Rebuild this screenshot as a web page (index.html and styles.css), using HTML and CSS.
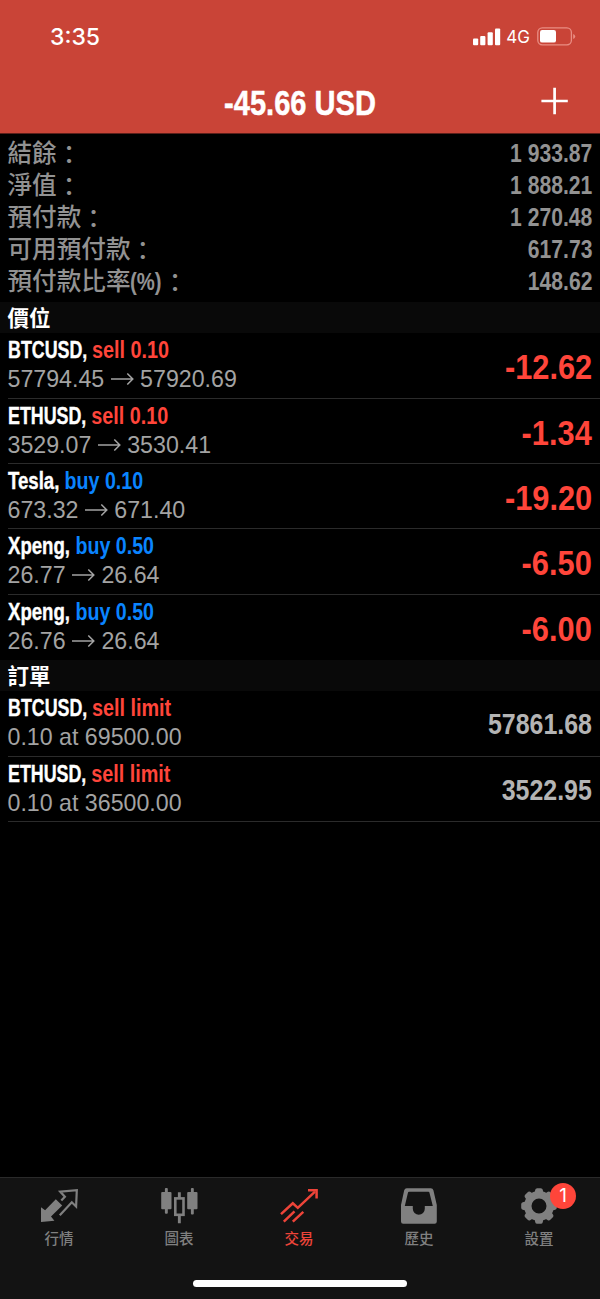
FILE: index.html
```html
<!DOCTYPE html>
<html lang="zh-Hant">
  <head>
    <meta charset="UTF-8" />
    <meta name="viewport" content="width=device-width, initial-scale=1.0" />
    <title>交易</title>
    <link rel="stylesheet" href="styles.css">
  </head>
  <body>
    <div class="app">
      <header class="header">
        <div class="status-bar">
          <span class="time">3:35</span>
          <div class="status-icons">
            <svg class="signal" width="28" height="18" viewBox="0 0 28 18" fill="#fff">
              <rect x="0" y="10.5" width="5.2" height="6.8" rx="1" />
              <rect x="7.2" y="8" width="5.2" height="9.3" rx="1" />
              <rect x="14.6" y="4.2" width="5.2" height="13.1" rx="1" />
              <rect x="22" y="0.5" width="5.2" height="16.8" rx="1" />
            </svg>
            <span class="network">4G</span>
            <svg class="battery" width="39" height="19" viewBox="0 0 39 19">
              <rect x="0.8" y="0.8" width="33.6" height="17" rx="4.5" fill="none" stroke="#e98d83" stroke-width="1.3" />
              <rect x="3" y="3" width="16" height="12.6" rx="2.2" fill="#fff" />
              <path d="M36.2 7v5q2-.6 2-2.5t-2-2.5z" fill="#e98d83" />
            </svg>
          </div>
        </div>
        <div class="title-bar">
          <h1 class="title">-45.66 USD</h1>
          <svg class="add" width="28" height="28" viewBox="0 0 28 28">
            <path d="M14.6 .8v26.4M1.4 14h26.4" stroke="#fff" stroke-width="2.7" />
          </svg>
        </div>
      </header>

      <main class="content">
        <!-- Account summary -->
        <div class="account">
          <div class="account-row"><span>結餘<span class="colon">：</span></span><span class="value">1 933.87</span></div>
          <div class="account-row"><span>淨值<span class="colon">：</span></span><span class="value">1 888.21</span></div>
          <div class="account-row"><span>預付款<span class="colon">：</span></span><span class="value">1 270.48</span></div>
          <div class="account-row"><span>可用預付款<span class="colon">：</span></span><span class="value">617.73</span></div>
          <div class="account-row"><span>預付款比率<span class="percent">(%)</span><span class="colon">：</span></span><span class="value">148.62</span></div>
        </div>

        <!-- Open positions -->
        <h2 class="section-title">價位</h2>
        <div class="row">
          <div class="info">
            <div class="name">BTCUSD, <span class="action sell">sell 0.10</span></div>
            <div class="price">57794.45 <svg class="arrow" viewBox="0 0 23 12"><path d="M0 6h22M16.3 .5l5.5 5.5-5.5 5.5" /></svg> 57920.69</div>
          </div>
          <div class="profit">-12.62</div>
        </div>
        <div class="row">
          <div class="info">
            <div class="name">ETHUSD, <span class="action sell">sell 0.10</span></div>
            <div class="price">3529.07 <svg class="arrow" viewBox="0 0 23 12"><path d="M0 6h22M16.3 .5l5.5 5.5-5.5 5.5" /></svg> 3530.41</div>
          </div>
          <div class="profit">-1.34</div>
        </div>
        <div class="row">
          <div class="info">
            <div class="name stock">Tesla, <span class="action buy">buy 0.10</span></div>
            <div class="price">673.32 <svg class="arrow" viewBox="0 0 23 12"><path d="M0 6h22M16.3 .5l5.5 5.5-5.5 5.5" /></svg> 671.40</div>
          </div>
          <div class="profit">-19.20</div>
        </div>
        <div class="row">
          <div class="info">
            <div class="name stock">Xpeng, <span class="action buy">buy 0.50</span></div>
            <div class="price">26.77 <svg class="arrow" viewBox="0 0 23 12"><path d="M0 6h22M16.3 .5l5.5 5.5-5.5 5.5" /></svg> 26.64</div>
          </div>
          <div class="profit">-6.50</div>
        </div>
        <div class="row last">
          <div class="info">
            <div class="name stock">Xpeng, <span class="action buy">buy 0.50</span></div>
            <div class="price">26.76 <svg class="arrow" viewBox="0 0 23 12"><path d="M0 6h22M16.3 .5l5.5 5.5-5.5 5.5" /></svg> 26.64</div>
          </div>
          <div class="profit">-6.00</div>
        </div>

        <!-- Pending orders -->
        <h2 class="section-title">訂單</h2>
        <div class="row">
          <div class="info">
            <div class="name">BTCUSD, <span class="action sell">sell limit</span></div>
            <div class="price">0.10 at 69500.00</div>
          </div>
          <div class="quote">57861.68</div>
        </div>
        <div class="row">
          <div class="info">
            <div class="name">ETHUSD, <span class="action sell">sell limit</span></div>
            <div class="price">0.10 at 36500.00</div>
          </div>
          <div class="quote">3522.95</div>
        </div>
      </main>

      <nav class="tab-bar">
        <div class="tabs">
          <div class="tab">
            <svg class="tab-icon" viewBox="0 0 38 36">
              <path d="M21.3 12.6l3.6-3.8-4.7-5.2 16.6-1.4-.7 16.3-4.3-4.2-12 13" fill="none" stroke="currentColor" stroke-width="2.2" />
              <path d="M15.8 11.2l6.4 6.4-11.2 10.8 3.4 4.4L1 34V19.3l4.1 3z" fill="currentColor" />
            </svg>
            <span>行情</span>
          </div>
          <div class="tab">
            <svg class="tab-icon" viewBox="0 0 38 36" fill="currentColor">
              <rect x="1.2" y="4" width="10.3" height="17.3" rx="1" />
              <rect x="4.9" y="0" width="2.9" height="25.7" rx="1" />
              <rect x="15.3" y="10.4" width="8.2" height="16.4" fill="none" stroke="currentColor" stroke-width="2.6" />
              <path d="M17.9 4.3h2.9v6h-2.9zM17.9 27h2.9v8.3h-2.9z" />
              <rect x="27.2" y="4" width="10.3" height="17.3" rx="1" />
              <rect x="30.9" y="0" width="2.9" height="26.5" rx="1" />
            </svg>
            <span>圖表</span>
          </div>
          <div class="tab active">
            <svg class="tab-icon" viewBox="0 0 38 36" fill="none" stroke="currentColor" stroke-width="2.5">
              <path d="M1 26.2l11.8-10.9 5 4.6L35 3.7" />
              <path d="M3.8 33.6l10.7-10.2M12.8 33.6l10.5-9.8" />
              <path d="M28 2.2h8.6v8.4" />
            </svg>
            <span>交易</span>
          </div>
          <div class="tab">
            <svg class="tab-icon" viewBox="0 0 38 36" fill="currentColor">
              <path fill-rule="evenodd" d="M6.8.2h24q2 0 2.6 2L36.8 17v16.5q0 2.2-2.2 2.2H3.2Q1 35.7 1 33.5V17L4.2 2.2q.6-2 2.6-2zM9 3.8q-.8 0-1 .8L4.8 18h8v2.7a6 6 0 0 0 12 0V18h8L29.4 4.6q-.2-.8-1-.8z" />
            </svg>
            <span>歷史</span>
          </div>
          <div class="tab">
            <svg class="tab-icon" viewBox="0 0 38 36" fill="none" stroke="currentColor">
              <circle cx="19" cy="18" r="11.2" stroke-width="7.4" />
              <g stroke-width="4" stroke-linecap="round" stroke-linejoin="round">
                <path id="teeth" d="M16.8 4l.4-1.8h3.6l.4 1.8M16.8 32l.4 1.8h3.6l.4-1.8M5 15.8l-1.8.4v3.6l1.8.4M33 15.8l1.8.4v3.6l-1.8.4" />
                <use href="#teeth" transform="rotate(45 19 18)" />
              </g>
            </svg>
            <span>設置</span>
            <div class="badge">1</div>
          </div>
        </div>
        <div class="home-indicator"></div>
      </nav>
    </div>
  </body>
</html>
```
FILE: styles.css
```css
* {
  box-sizing: border-box;
}

body {
  margin: 0;
  background-color: #000;
  font-family: "Liberation Sans", "Noto Sans CJK TC", sans-serif;
}

.app {
  display: flex;
  flex-direction: column;
  width: 600px;
  height: 1299px;
  overflow: hidden;
}

/* Header */
.header {
  height: 134px;
  background-color: #c94437;
  border-bottom: 1px solid #5c1f1a;
  color: #fff;
}

.status-bar {
  display: flex;
  justify-content: space-between;
  align-items: center;
  height: 73px;
  padding: 0 24px 0 50px;
}

.time {
  font-family: Inter, sans-serif;
  font-size: 23px;
  font-weight: 500;
}

.status-icons {
  display: flex;
  align-items: center;
}

.network {
  margin: 0 7px 0 5px;
  font-family: Inter, sans-serif;
  font-size: 17px;
}

.title-bar {
  display: grid;
  grid-template-columns: 60px 1fr 60px;
  align-items: center;
  height: 56px;
}

.title {
  grid-column: 2;
  margin: 0;
  font-size: 35px;
  line-height: 59px;
  text-align: center;
  transform: scaleX(0.83);
  -webkit-text-stroke: 0.5px currentColor;
}

.add {
  justify-self: start;
  margin-bottom: 3px;
}

/* Account summary */
.account {
  padding: 4px 8px 4px 7.5px;
  color: #929292;
}

.account-row {
  display: flex;
  justify-content: space-between;
  height: 32px;
  font-size: 24.6px;
  font-weight: 500;
  line-height: 32px;
}

.colon {
  display: inline-block;
  transform: translateY(2px);
}

/* Condensed bold numerals */
.value,
.percent {
  display: inline-block;
  font-size: 25px;
  font-weight: bold;
  line-height: 30px;
  transform: scaleX(0.845);
  transform-origin: right;
}

.percent {
  margin-right: -5px;
  font-size: 24px;
  transform-origin: left;
}

.section-title {
  height: 31.4px;
  margin: 0;
  padding: 1px 0 0 7.5px;
  background-color: #090909;
  color: #fff;
  font-size: 21.5px;
  line-height: 32px;
}

/* Positions and orders */
.row {
  display: flex;
  justify-content: space-between;
  height: 65.3px;
  margin-left: 7.5px;
  padding-right: 8px;
  border-bottom: 1px solid #2b2b2b;
}

.row.last {
  border-bottom-color: transparent;
}

.name {
  padding-top: 2px;
  color: #fff;
  font-size: 24px;
  font-weight: bold;
  line-height: 30px;
  white-space: nowrap;
  transform: scaleX(0.743);
  transform-origin: left;
  -webkit-text-stroke: 0.4px currentColor;
}

.name.stock {
  transform: scaleX(0.775);
}

.action {
  display: inline-block;
  transform: scaleX(1.11);
  transform-origin: left;
  -webkit-text-stroke: 0;
}

.stock .action {
  transform: scaleX(1.055);
}

.sell {
  color: #ff453a;
}

.buy {
  color: #0a84ff;
}

.price {
  color: #a3a3a3;
  font-size: 23.2px;
  line-height: 29.5px;
}

.arrow {
  width: 23px;
  height: 12px;
  vertical-align: 2px;
  fill: none;
  stroke: #a3a3a3;
  stroke-width: 1.5;
}

.profit,
.quote {
  color: #ff453a;
  font-size: 35px;
  font-weight: bold;
  line-height: 68px;
  transform: scaleX(0.88);
  transform-origin: right;
}

.quote {
  color: #b4b4b4;
  font-size: 29px;
  line-height: 66px;
  transform: scaleX(0.86);
}

/* Bottom tabs */
.tab-bar {
  height: 122px;
  margin-top: auto;
  background-color: #131313;
  border-top: 1px solid #2a2a2a;
}

.tabs {
  display: grid;
  grid-template-columns: repeat(5, 120px);
  height: 102px;
  margin-left: -1px;
}

.tab {
  position: relative;
  display: flex;
  flex-direction: column;
  align-items: center;
  padding-top: 10px;
  color: #808080;
  font-size: 14.5px;
  font-weight: 500;
  line-height: 22px;
}

.tab.active {
  color: #ed4439;
}

.tab-icon {
  width: 38px;
  height: 36px;
  margin-bottom: 4px;
}

.badge {
  position: absolute;
  top: 5px;
  left: 71px;
  width: 26px;
  height: 26px;
  border-radius: 50%;
  background-color: #ff453a;
  color: #fff;
  font-family: Inter, sans-serif;
  font-size: 19px;
  font-weight: 400;
  line-height: 26px;
  text-align: center;
}

.home-indicator {
  width: 214px;
  height: 7px;
  margin: 0 auto;
  border-radius: 4px;
  background-color: #fff;
}
```
